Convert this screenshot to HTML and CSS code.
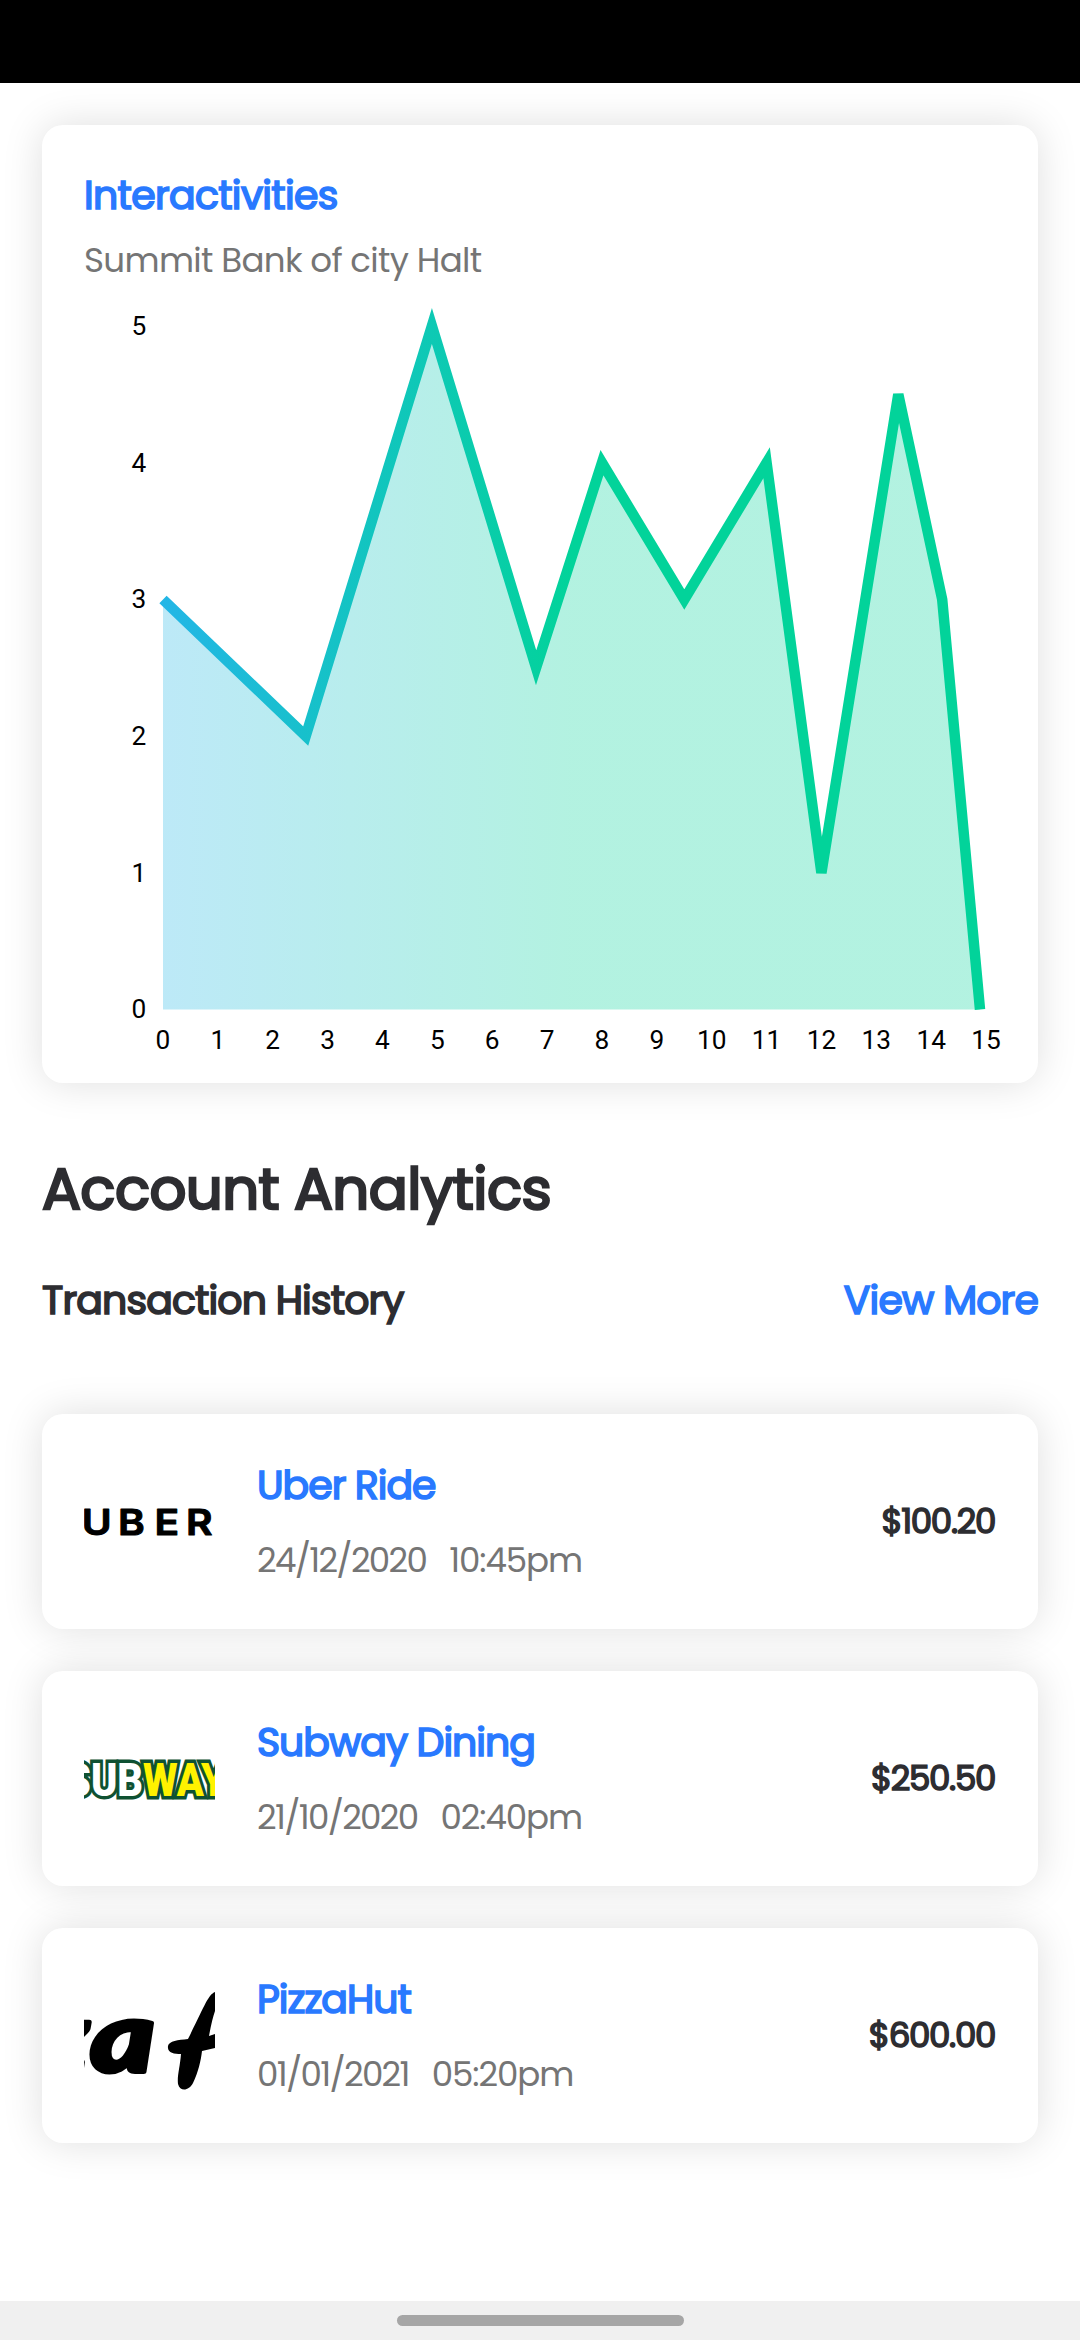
FILE: index.html
```
<!DOCTYPE html>
<html lang="en">
<head>
<meta charset="utf-8">
<title>Account Analytics</title>
<link rel="stylesheet" href="styles.css">
</head>
<body>
<div class="status-bar"></div>
<main class="screen">
  <section class="card chart-card">
    <h2 class="card-title">Interactivities</h2>
    <p class="card-sub">Summit Bank of city Halt</p>
    <svg class="chart" viewBox="84 290 944 780" width="944" height="780">
      <defs>
        <linearGradient id="line" gradientUnits="userSpaceOnUse" x1="163" y1="0" x2="572" y2="0">
          <stop offset="0" stop-color="#23b6e6"/><stop offset="1" stop-color="#02d39a"/>
        </linearGradient>
      </defs>
      <path fill="url(#line)" fill-opacity=".3" d="M163 599.5 305.7 736 431.9 326 536.1 667.8 602 462.7 684.3 599.5 766.6 462.7 821.4 872.8 898.3 394.4 942.2 599.5 980 1009.5H163Z"/>
      <path fill="none" stroke="url(#line)" stroke-width="10.5" stroke-miterlimit="4" d="M163 599.5 305.7 736 431.9 326 536.1 667.8 602 462.7 684.3 599.5 766.6 462.7 821.4 872.8 898.3 394.4 942.2 599.5 980 1009.5"/>
      <g class="tick" text-anchor="middle">
        <text x="139" y="335">5</text><text x="139" y="471.5">4</text><text x="139" y="608">3</text><text x="139" y="745">2</text><text x="139" y="881.5">1</text><text x="139" y="1018">0</text>
        <text x="163" y="1049">0</text><text x="217.9" y="1049">1</text><text x="272.7" y="1049">2</text><text x="327.6" y="1049">3</text><text x="382.5" y="1049">4</text><text x="437.4" y="1049">5</text><text x="492.2" y="1049">6</text><text x="547.1" y="1049">7</text><text x="602" y="1049">8</text><text x="656.8" y="1049">9</text><text x="711.7" y="1049">10</text><text x="766.6" y="1049">11</text><text x="821.4" y="1049">12</text><text x="876.3" y="1049">13</text><text x="931.2" y="1049">14</text><text x="986" y="1049">15</text>
      </g>
    </svg>
  </section>
  <h1 class="heading">Account Analytics</h1>
  <div class="row-head">
    <h2 class="row-title">Transaction History</h2>
    <a class="more">View More</a>
  </div>
  <ul class="list">
    <li class="card item">
      <svg class="logo" viewBox="0 0 131 131" width="131" height="131">
        <text class="uber" transform="scale(1.13 1)" x="-2 30 62.3 90.3" y="79">UBER</text>
      </svg>
      <div class="info">
        <h3 class="name">Uber Ride</h3>
        <p class="when"><span class="date">24/12/2020</span><span class="time">10:45pm</span></p>
      </div>
      <strong class="amount">$100.20</strong>
    </li>
    <li class="card item">
      <svg class="logo" viewBox="0 0 131 131" width="131" height="131">
        <text class="subway" x="-18" y="83" textLength="160" lengthAdjust="spacingAndGlyphs"><tspan fill="#fff">SUB</tspan><tspan fill="#fff200">WAY</tspan></text>
      </svg>
      <div class="info">
        <h3 class="name">Subway Dining</h3>
        <p class="when"><span class="date">21/10/2020</span><span class="time">02:40pm</span></p>
      </div>
      <strong class="amount">$250.50</strong>
    </li>
    <li class="card item">
      <svg class="logo" viewBox="0 0 131 131" width="131" height="131">
        <g class="hut" transform="scale(1.27 1)"><text x="-38" y="102">z</text><text x="5" y="102">a</text></g>
        <path d="M131 22C124 25 121 35 104 69C94 70 85 71 84 76C83 83 90 84 97 84C96 97 93 106 94 114C96 122 105 121 109 113C114 103 117 90 118 81L131 78V64L125 66C127 55 129 47 131 41Z"/>
      </svg>
      <div class="info">
        <h3 class="name">PizzaHut</h3>
        <p class="when"><span class="date">01/01/2021</span><span class="time">05:20pm</span></p>
      </div>
      <strong class="amount">$600.00</strong>
    </li>
  </ul>
</main>
<footer class="nav-bar"><span class="pill"></span></footer>
</body>
</html>
```
FILE: styles.css
```
* { box-sizing: border-box; margin: 0; padding: 0; }
body { width: 1080px; height: 2340px; display: flex; flex-direction: column; overflow: hidden; background: #fff; color: #2d2d31; font-family: Poppins, Inter, sans-serif; }
.status-bar { height: 83px; background: #000; flex: none; position: relative; }
.screen { flex: 1; padding: 42px 42px 0; }
.card { background: #fff; border-radius: 21px; box-shadow: 0 0 40px rgba(0, 0, 0, .13); }
.chart-card { height: 958px; padding: 43px 0 0 42px; }
.card-title, .name { color: #2979ff; font-size: 39.4px; line-height: 56px; font-weight: 400; -webkit-text-stroke: 1.7px; letter-spacing: -.67px; }
.name { letter-spacing: -1px; }
.card-sub, .when { color: #757575; font-size: 34.1px; line-height: 48px; font-weight: 400; }
.card-sub { margin-top: 12px; letter-spacing: -.67px; }
.chart { display: block; margin-top: 6px; }
.tick { font-family: Roboto, sans-serif; font-size: 26.25px; fill: #000; }
.heading { font-size: 57.75px; line-height: 80px; font-weight: 400; -webkit-text-stroke: 2.5px; letter-spacing: -.55px; margin-top: 66px; }
.row-head { display: flex; justify-content: space-between; margin-top: 41px; height: 60px; align-items: center; }
.row-title, .more { font-size: 39.4px; font-weight: 400; -webkit-text-stroke: 1.7px; letter-spacing: -.85px; }
.more { color: #2979ff; }
.list { list-style: none; display: grid; gap: 42px; margin-top: 84px; }
.item { height: 215px; padding: 0 43px 0 42px; display: flex; align-items: center; }
.logo { flex: none; overflow: hidden; }
.info { flex: 1; padding-left: 42px; }
.name { margin-top: -1px; }
.when { margin-top: 22px; display: flex; gap: 23px; }
.date { letter-spacing: -1.68px; }
.time { letter-spacing: -1.1px; }
.amount { font-size: 34.1px; font-weight: 400; -webkit-text-stroke: 1.5px; letter-spacing: -1.35px; }
.uber { font: 600 36px Inter, sans-serif; stroke: #000; stroke-width: 1px; stroke-linejoin: round; }
.subway { font: 900 46px Roboto, sans-serif; stroke: #0f5132; stroke-width: 7px; paint-order: stroke; }
.hut { font: italic 900 97px Lato, sans-serif; stroke: #000; stroke-width: 4px; stroke-linejoin: round; }
.nav-bar { height: 39px; background: #f0f0f0; display: flex; justify-content: center; padding-top: 14px; flex: none; }
.pill { width: 287px; height: 11px; border-radius: 6px; background: #a6a6a6; }
```
